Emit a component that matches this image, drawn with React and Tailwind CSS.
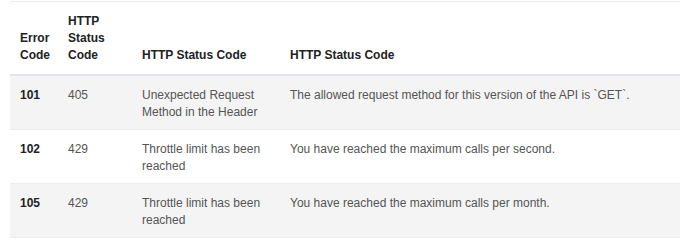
const rows = [
  {
    code: '101',
    status: '405',
    title: 'Unexpected Request Method in the Header',
    desc: 'The allowed request method for this version of the API is `GET`.',
  },
  {
    code: '102',
    status: '429',
    title: 'Throttle limit has been reached',
    desc: 'You have reached the maximum calls per second.',
  },
  {
    code: '105',
    status: '429',
    title: 'Throttle limit has been reached',
    desc: 'You have reached the maximum calls per month.',
  },
]

const App = () => {
  return (
    <div className="bg-white w-[680px] h-[241px] pl-[10px] pt-px font-['Liberation_Sans',Arial,sans-serif] text-[12px] leading-[17px]">
      <table className="w-[670px] table-fixed border-collapse border-t border-[#ececec]">
        <colgroup>
          <col className="w-[48px]" />
          <col className="w-[74px]" />
          <col className="w-[148px]" />
          <col />
        </colgroup>
        <thead>
          <tr className="border-b-2 border-[#e3e4ea]">
            <th className="align-bottom text-left font-bold text-[#222] pl-[10px] pr-2 pt-[11px] pb-[10px]">Error Code</th>
            <th className="align-bottom text-left font-bold text-[#222] pl-[10px] pr-2 pt-[11px] pb-[10px]">HTTP Status Code</th>
            <th className="align-bottom text-left font-bold text-[#222] pl-[10px] pr-2 pt-[11px] pb-[10px]">HTTP Status Code</th>
            <th className="align-bottom text-left font-bold text-[#222] pl-[10px] pr-2 pt-[11px] pb-[10px]">HTTP Status Code</th>
          </tr>
        </thead>
        <tbody>
          {rows.map((r, i) => (
            <tr key={r.code} className={`border-b border-[#ececec] ${i % 2 === 0 ? 'bg-[#f4f4f4]' : 'bg-white'}`}>
              <td className="align-top font-bold text-[#222] pl-[10px] pr-2 pt-[11px] pb-[8px]">{r.code}</td>
              <td className="align-top text-[#555] pl-[10px] pr-2 pt-[11px] pb-[8px]">{r.status}</td>
              <td className="align-top text-[#555] pl-[10px] pr-2 pt-[11px] pb-[8px]">{r.title}</td>
              <td className="align-top text-[#555] pl-[10px] pr-2 pt-[11px] pb-[8px]">{r.desc}</td>
            </tr>
          ))}
        </tbody>
      </table>
    </div>
  )
}

export default App
